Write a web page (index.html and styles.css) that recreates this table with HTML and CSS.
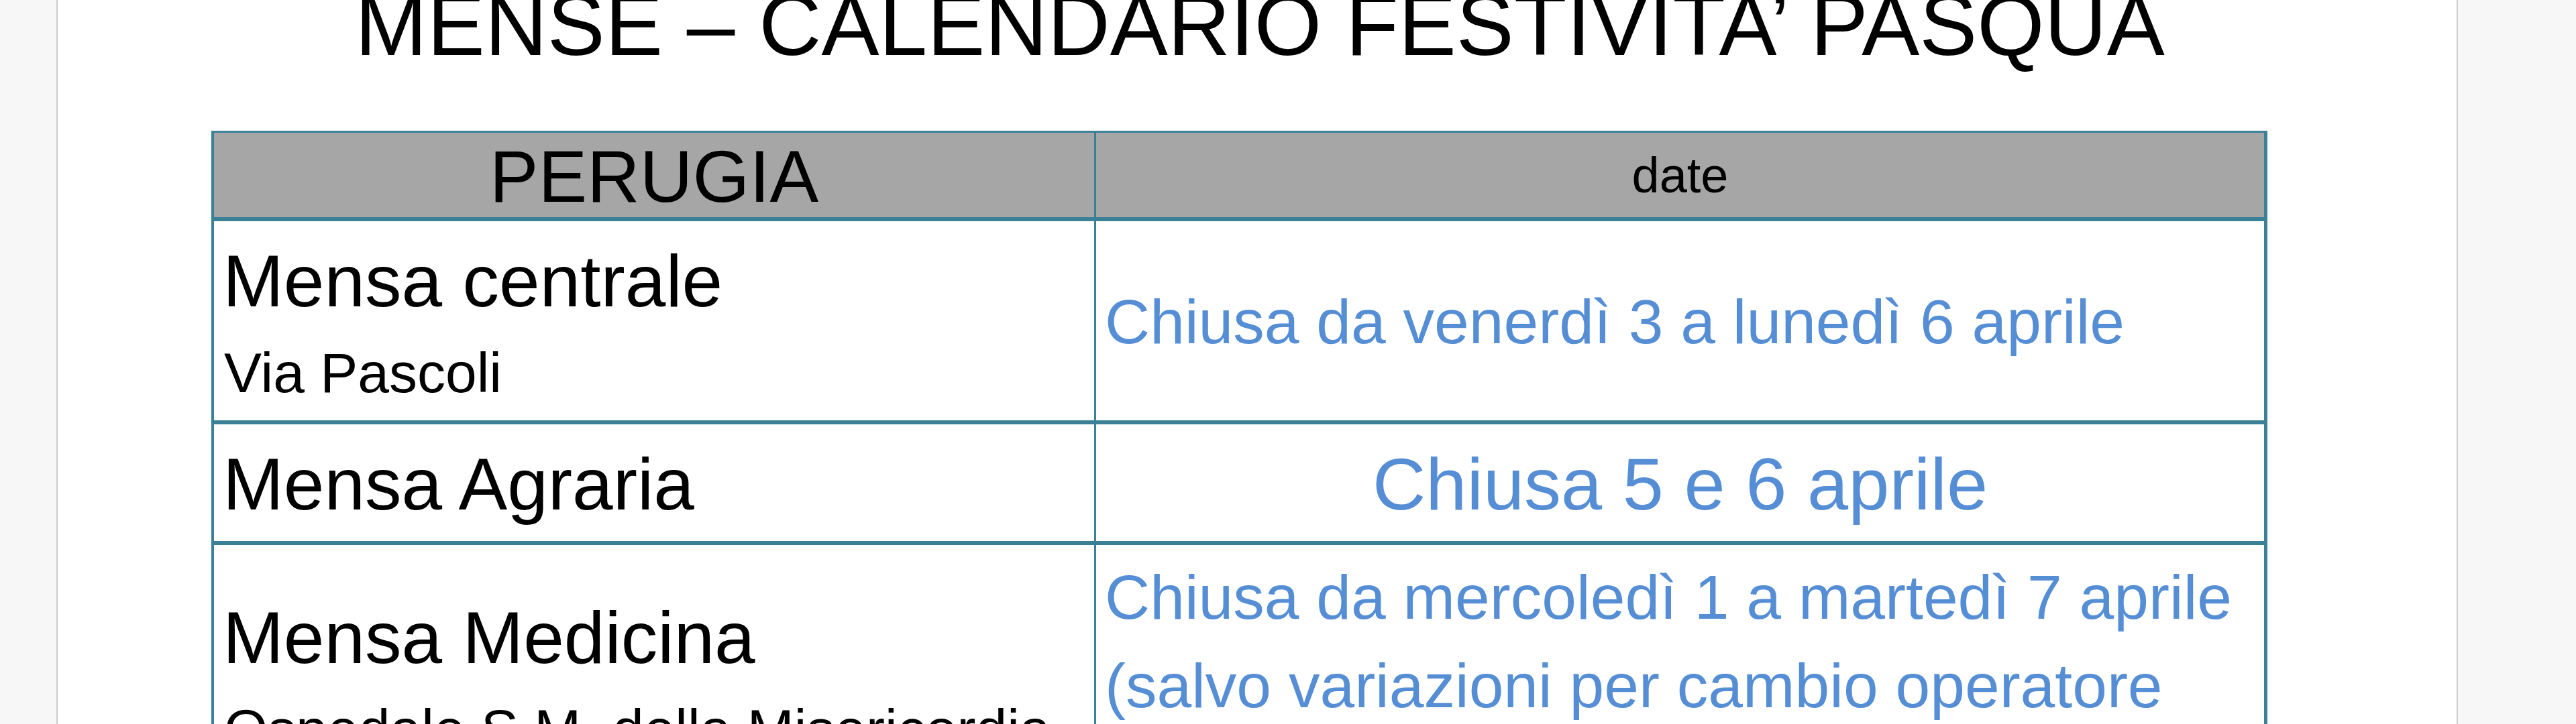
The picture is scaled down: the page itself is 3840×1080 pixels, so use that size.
FILE: index.html
```html
<!DOCTYPE html>
<html lang="it">
<head>
<meta charset="utf-8">
<title>Mense – Calendario festività Pasqua</title>
<link rel="stylesheet" href="styles.css">
</head>
<body>
<div class="page">
  <h1 class="title">MENSE – CALENDARIO FESTIVITA’ PASQUA</h1>
  <div class="tbl">
    <div class="row head">
      <div class="cell cell-l city">PERUGIA</div>
      <div class="cell cell-r date">date</div>
    </div>
    <div class="row r1">
      <div class="cell cell-l">
        <div class="name">Mensa centrale</div>
        <div class="addr">Via Pascoli</div>
      </div>
      <div class="cell cell-r info">Chiusa da venerdì 3 a lunedì 6 aprile</div>
    </div>
    <div class="row r2">
      <div class="cell cell-l">
        <div class="name">Mensa Agraria</div>
      </div>
      <div class="cell cell-r info big">Chiusa 5 e 6 aprile</div>
    </div>
    <div class="row r3">
      <div class="cell cell-l">
        <div class="name">Mensa Medicina</div>
        <div class="addr">Ospedale S.M. della Misericordia</div>
      </div>
      <div class="cell cell-r info">Chiusa da mercoledì 1 a martedì 7 aprile<br>(salvo variazioni per cambio operatore</div>
    </div>
  </div>
</div>
</body>
</html>
```

FILE: styles.css
```css
* { box-sizing: border-box; }

html, body {
  margin: 0;
  height: 100%;
  overflow: hidden;
  background: #f7f7f7;
}

body {
  font-family: "Liberation Sans", Arial, sans-serif;
  color: #000;
}

.page {
  display: flow-root;
  margin-left: 84px;
  width: 3580px;
  min-height: 1300px;
  background: #fff;
  border-left: 2px solid #cbcbcb;
  border-right: 2px solid #cbcbcb;
}

.title {
  margin: -27px 0 93px;
  padding-left: 8px;
  font-size: 129px;
  line-height: 129px;
  font-weight: 400;
  text-align: center;
  white-space: nowrap;
}

.tbl {
  margin-left: 229px;
  width: 3065px;
  border-style: solid;
  border-color: #3a8198;
  border-width: 3px 5px 0 4px;
}

.row {
  display: grid;
  grid-template-columns: 1315px 1fr;
  border-bottom: 6px solid #3a8198;
}

.cell {
  display: flex;
  flex-direction: column;
  justify-content: center;
}

.cell-l {
  border-right: 3px solid #3a8198;
  padding-left: 13px;
}

.cell-r {
  padding-left: 13px;
}

.head {
  background: #a6a6a6;
  height: 132px;
}

.city {
  padding: 5px 0 0;
  font-size: 109px;
  line-height: 121px;
  text-align: center;
  justify-content: flex-start;
}

.date {
  padding-left: 0;
  font-size: 74px;
  line-height: 85px;
  text-align: center;
}

.name {
  font-size: 109px;
  line-height: 126px;
  white-space: nowrap;
}

.addr {
  margin-top: 27px;
  padding-left: 2px;
  font-size: 84px;
  line-height: 94px;
  white-space: nowrap;
}

.info {
  color: #558ed5;
  font-size: 93px;
  line-height: 132px;
}

.info.big {
  padding-left: 0;
  font-size: 110px;
  line-height: 126px;
  text-align: center;
}

.r1 { height: 303px; }
.r1 .cell { padding-top: 2px; }

.r2 { height: 180px; }
.r2 .cell { padding-top: 4px; }

.r3 .cell { justify-content: flex-start; }
.r3 .cell-l { padding-top: 75px; padding-bottom: 60px; }
.r3 .cell-r { padding-top: 12px; }
```
